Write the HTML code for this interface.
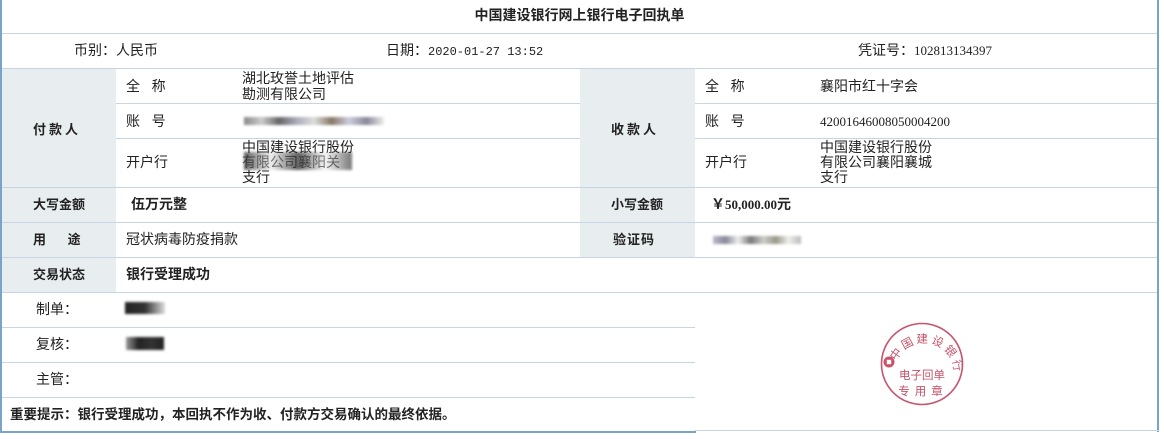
<!DOCTYPE html>
<html><head><meta charset="utf-8"><style>
*{margin:0;padding:0;box-sizing:border-box}
body{width:1164px;height:439px;background:#fff;position:relative;overflow:hidden;font-family:"Liberation Sans","Noto Sans CJK SC",sans-serif;font-size:14px;color:#222}
.a{position:absolute}
.h{position:absolute;height:1px;background:#c5d6e2}
.g{position:absolute;background:#e8edf0}
.t{position:absolute;white-space:nowrap;line-height:15px}
.b{font-weight:bold;font-size:13px}
.m{font-family:"Liberation Mono",monospace;font-size:12px}
.s{font-family:"Liberation Serif",serif;font-size:13px}
.blur{position:absolute;filter:blur(1.2px)}
</style></head><body>
<div class="a" style="left:0;top:0;width:2px;height:433px;background:#7aa3c8"></div>
<div class="a" style="left:1157px;top:0;width:2px;height:432px;background:#7aa3c8"></div>
<div class="a" style="left:0;top:431px;width:696px;height:2px;background:#7aa3c8"></div>
<div class="a" style="left:695px;top:430px;width:464px;height:1px;background:#c5d6e2"></div>

<div class="g" style="left:2px;top:69px;width:114px;height:118px"></div>
<div class="g" style="left:580px;top:69px;width:115px;height:118px"></div>
<div class="g" style="left:2px;top:188px;width:114px;height:104px"></div>
<div class="g" style="left:580px;top:188px;width:115px;height:34px"></div>
<div class="g" style="left:580px;top:223px;width:115px;height:34px"></div>

<div class="h" style="left:2px;top:33px;width:1155px"></div>
<div class="h" style="left:2px;top:68px;width:1155px"></div>
<div class="h" style="left:116px;top:103px;width:464px"></div>
<div class="h" style="left:695px;top:103px;width:462px"></div>
<div class="h" style="left:116px;top:138px;width:464px"></div>
<div class="h" style="left:695px;top:138px;width:462px"></div>
<div class="h" style="left:2px;top:187px;width:1155px"></div>
<div class="h" style="left:2px;top:222px;width:1155px"></div>
<div class="h" style="left:2px;top:257px;width:1155px"></div>
<div class="h" style="left:2px;top:292px;width:1155px"></div>
<div class="h" style="left:2px;top:327px;width:693px"></div>
<div class="h" style="left:2px;top:362px;width:693px"></div>
<div class="h" style="left:2px;top:397px;width:693px"></div>

<div class="t" style="left:0;width:1159px;text-align:center;top:8px;font-weight:bold;font-size:14px">中国建设银行网上银行电子回执单</div>
<div class="t" style="left:74px;top:43px">币别：人民币</div>
<div class="t" style="left:386px;top:43px">日期：<span class="m">2020-01-27 13:52</span></div>
<div class="t" style="left:858px;top:43px">凭证号：<span class="s">102813134397</span></div>

<div class="t b" style="left:33px;top:122px;letter-spacing:3px">付款人</div>
<div class="t b" style="left:611px;top:122px;letter-spacing:3px">收款人</div>
<div class="t" style="left:126px;top:79px">全&nbsp;&nbsp;&nbsp;称</div>
<div class="t" style="left:126px;top:114px">账&nbsp;&nbsp;&nbsp;号</div>
<div class="t" style="left:126px;top:155px">开户行</div>
<div class="t" style="left:705px;top:79px">全&nbsp;&nbsp;&nbsp;称</div>
<div class="t" style="left:705px;top:114px">账&nbsp;&nbsp;&nbsp;号</div>
<div class="t" style="left:705px;top:155px">开户行</div>

<div class="t" style="left:242px;top:70px;line-height:16px">湖北玫誉土地评估<br>勘测有限公司</div>
<div class="blur" style="left:244px;top:117px;width:140px;height:8px;background:linear-gradient(90deg,#888,#ccc,#666,#aab,#ddd,#876,#ccd,#889,#eee)"></div>
<div class="t" style="left:242px;top:140px;line-height:15px">中国建设银行股份<br><span style="color:#555">有限公司襄阳关</span><br>支行</div>
<div class="blur" style="left:244px;top:152px;width:108px;height:18px;background:linear-gradient(90deg,rgba(30,30,30,.7),rgba(200,200,200,.3),rgba(30,30,30,.7),rgba(220,220,220,.3),rgba(30,30,30,.6))"></div>
<div class="t" style="left:820px;top:79px">襄阳市红十字会</div>
<div class="t s" style="left:820px;top:114px">42001646008050004200</div>
<div class="t" style="left:820px;top:140px;line-height:15px">中国建设银行股份<br>有限公司襄阳襄城<br>支行</div>

<div class="t b" style="left:33px;top:197px">大写金额</div>
<div class="t" style="left:131px;top:197px;font-weight:bold">伍万元整</div>
<div class="t b" style="left:611px;top:197px">小写金额</div>
<div class="t" style="left:711px;top:197px;font-weight:bold">￥<span class="s" style="font-weight:bold">50,000.00</span>元</div>

<div class="t b" style="left:33px;top:232px">用&nbsp;&nbsp;&nbsp;&nbsp;&nbsp;&nbsp;途</div>
<div class="t" style="left:126px;top:232px">冠状病毒防疫捐款</div>
<div class="t b" style="left:613px;top:232px;letter-spacing:1px">验证码</div>
<div class="blur" style="left:713px;top:236px;width:88px;height:8px;background:linear-gradient(90deg,#bbc,#889,#eee,#777,#ccc,#998,#eee,#bbb)"></div>

<div class="t b" style="left:33px;top:267px">交易状态</div>
<div class="t" style="left:126px;top:267px;font-weight:bold">银行受理成功</div>

<div class="t" style="left:36px;top:302px">制单：</div>
<div class="blur" style="left:125px;top:302px;width:40px;height:12px;background:linear-gradient(90deg,#222,#333,#ddd)"></div>
<div class="t" style="left:36px;top:337px">复核：</div>
<div class="blur" style="left:126px;top:337px;width:38px;height:13px;background:linear-gradient(90deg,#999,#222,#333,#222)"></div>
<div class="t" style="left:36px;top:372px">主管：</div>
<div class="t" style="left:10px;top:407px;font-weight:bold;font-size:13.5px">重要提示：银行受理成功，本回执不作为收、付款方交易确认的最终依据。</div>

<svg class="a" style="left:875px;top:318px" width="95" height="95" viewBox="0 0 95 95">
<circle cx="47" cy="46" r="40.5" fill="none" stroke="#c8536a" stroke-width="1.6"/>
<defs><path id="arc" d="M20,62 A30,30 0 1 1 79,52"/></defs>
<text font-size="11.5" fill="#c8536a" font-family="Noto Sans CJK SC,sans-serif"><textPath href="#arc" startOffset="19%" letter-spacing="2.5">中国建设银行</textPath></text>
<circle cx="14" cy="44" r="5.5" fill="#c8536a"/><rect x="11.8" y="41.8" width="4.4" height="4.4" fill="#fff"/>
<text x="47" y="61" text-anchor="middle" font-size="11.5" fill="#c8536a" font-family="Noto Sans CJK SC,sans-serif">电子回单</text>
<text x="48" y="77" text-anchor="middle" font-size="11.5" fill="#c8536a" font-family="Noto Sans CJK SC,sans-serif" letter-spacing="5">专用章</text>
</svg>
</body></html>
